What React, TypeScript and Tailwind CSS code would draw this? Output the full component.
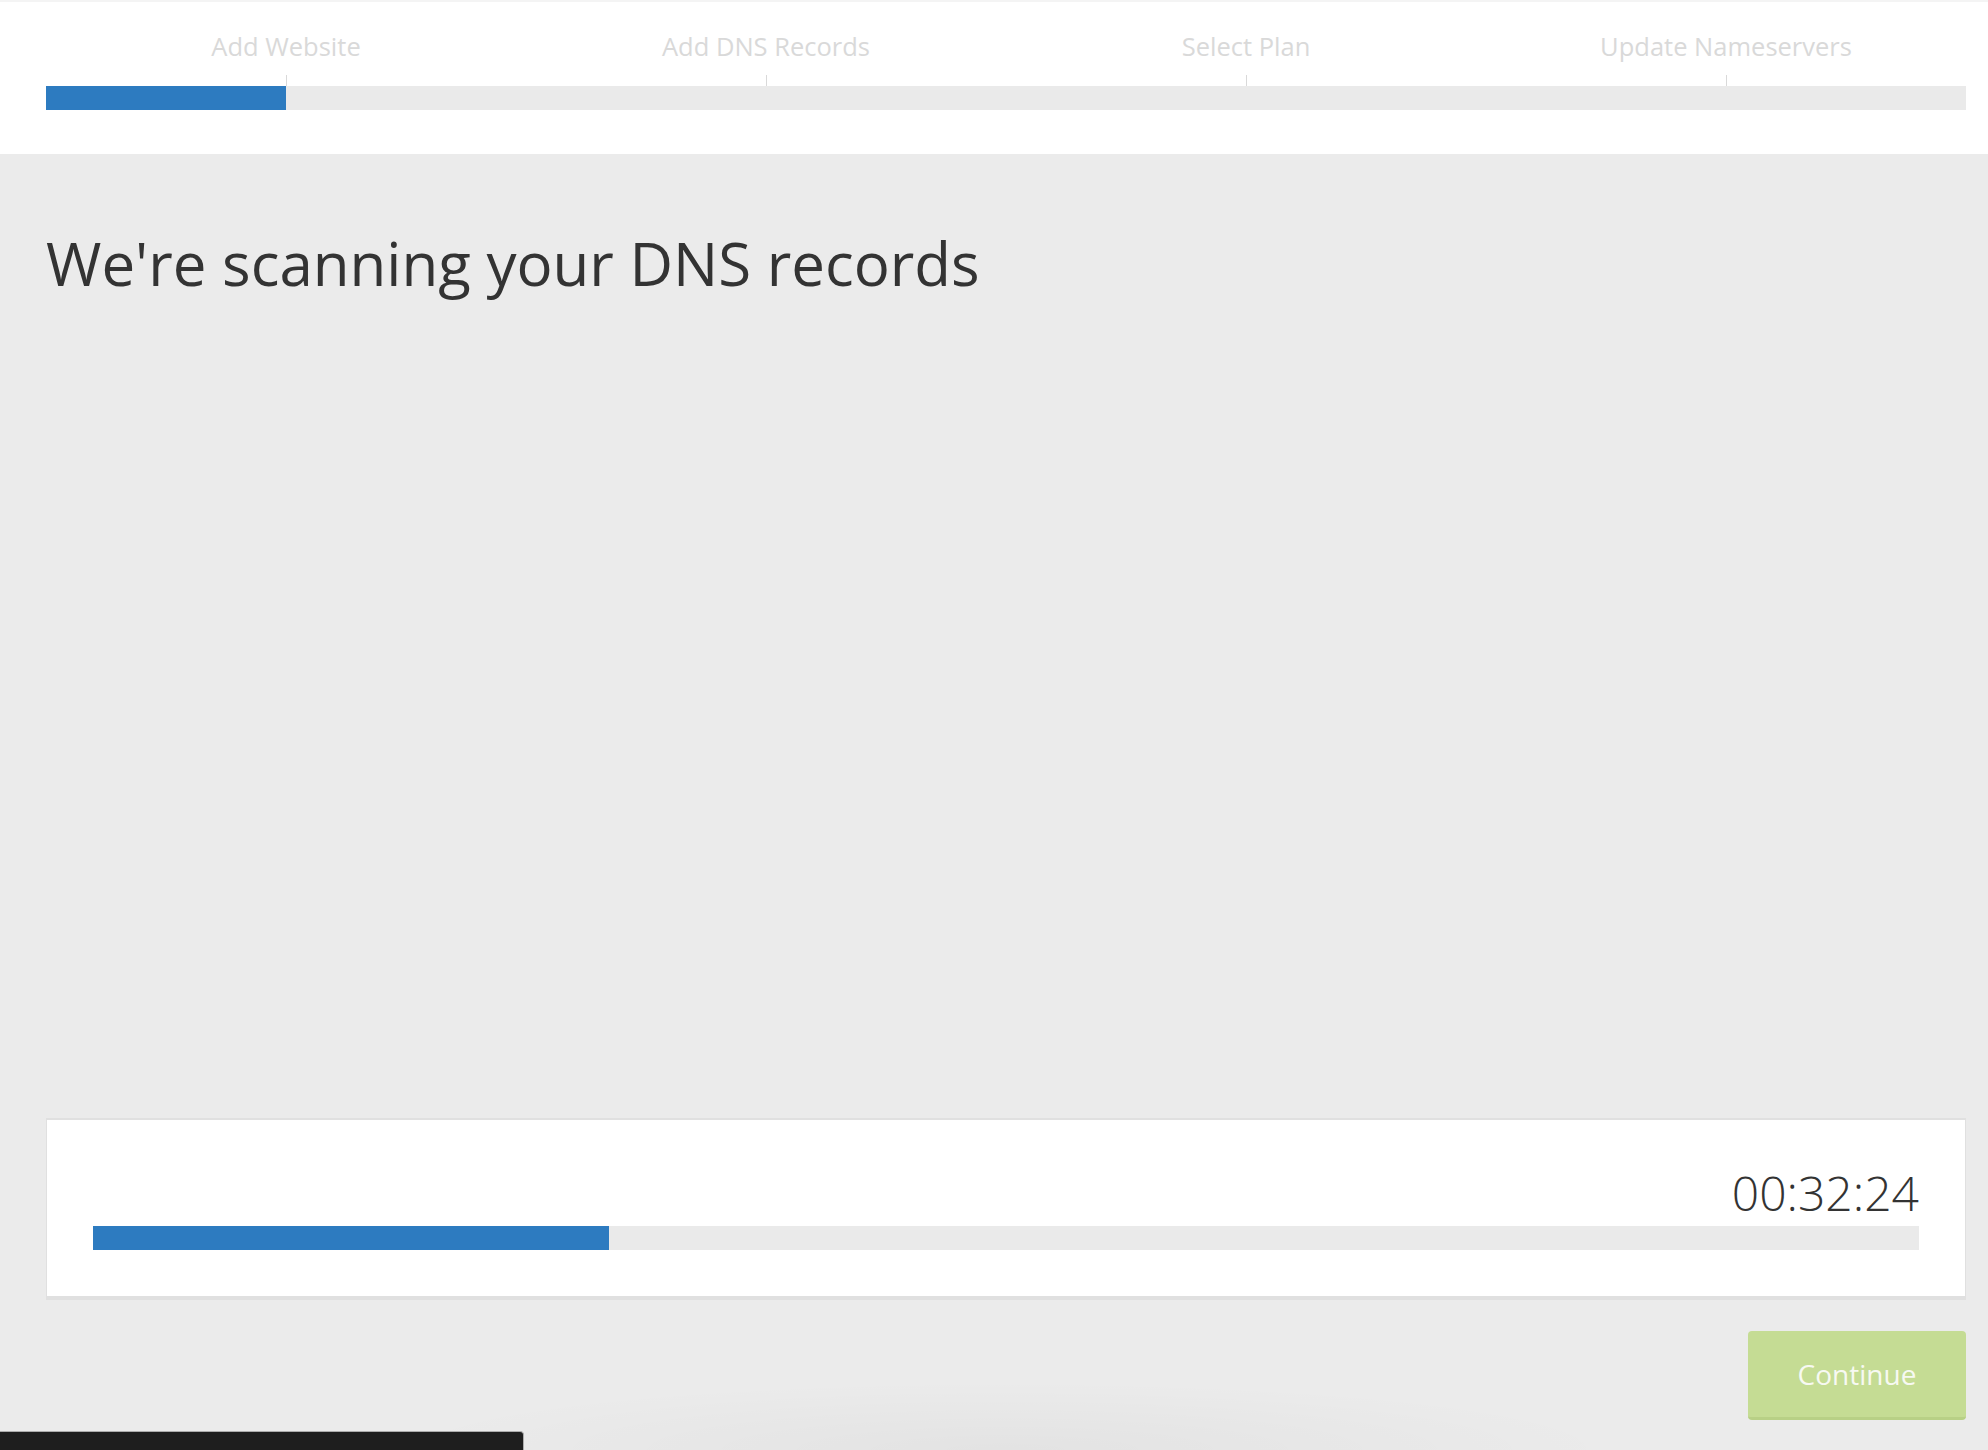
import React from "react";

const steps = ["Add Website", "Add DNS Records", "Select Plan", "Update Nameservers"];

export default function App() {
  return (
    <div
      className="relative h-[1450px] w-full overflow-hidden bg-[#ebebeb] text-[#333]"
      style={{ fontFamily: '"Open Sans", "Noto Sans", sans-serif' }}
    >
      <header className="h-[154px] border-t-2 border-[#f4f4f4] bg-white pl-[46px] pt-[27px]">
        <div className="w-[1920px]">
          <div className="grid h-[34px] grid-cols-4">
            {steps.map((s) => (
              <div key={s} className="text-center text-[25.5px] font-normal leading-[34px] text-[#d9d9d9]">
                {s}
              </div>
            ))}
          </div>
          <div className="mt-[12px] grid h-[11px] grid-cols-4">
            {steps.map((s) => (
              <div key={s} className="flex justify-center">
                <div className="h-full w-px bg-[#d9d9d9]" />
              </div>
            ))}
          </div>
          <div className="h-[24px] w-full bg-[#eaeaea]">
            <div className="h-full w-[240px] bg-[#2d7bc0]" />
          </div>
        </div>
      </header>

      <main className="pl-[46px]">
        <div className="w-[1920px]">
          <h1 className="mt-[79px] text-[60px] font-normal leading-none text-[#333]">
            We're scanning your DNS records
          </h1>

          <div className="mt-[825px] border border-t-2 border-b-4 border-[#e0e0e0] bg-white px-[46px] pb-[46px] pt-[49px]">
            <div className="text-right text-[48px] font-light leading-none text-[#333]">00:32:24</div>
            <div className="mt-[9px] h-[24px] w-full bg-[#eaeaea]">
              <div className="h-full w-[516px] bg-[#2d7bc0]" />
            </div>
          </div>

          <div className="mt-[31px] flex justify-end">
            <button className="h-[89px] w-[218px] rounded-[4px] border-b-[3px] border-[#b8d086] bg-[#c5dc94] text-[28px] text-[#f7f9f2]">
              Continue
            </button>
          </div>
        </div>
      </main>

      <div className="pointer-events-none absolute bottom-0 left-[380px] h-[70px] w-[1250px] bg-[radial-gradient(ellipse_at_bottom,rgba(0,0,0,0.035),transparent_70%)]" />
      <div className="absolute bottom-0 left-0 h-[19px] w-[524px] rounded-tr-[4px] border-r border-t border-[#acacac] bg-[#1e1e1e]" />
    </div>
  );
}
